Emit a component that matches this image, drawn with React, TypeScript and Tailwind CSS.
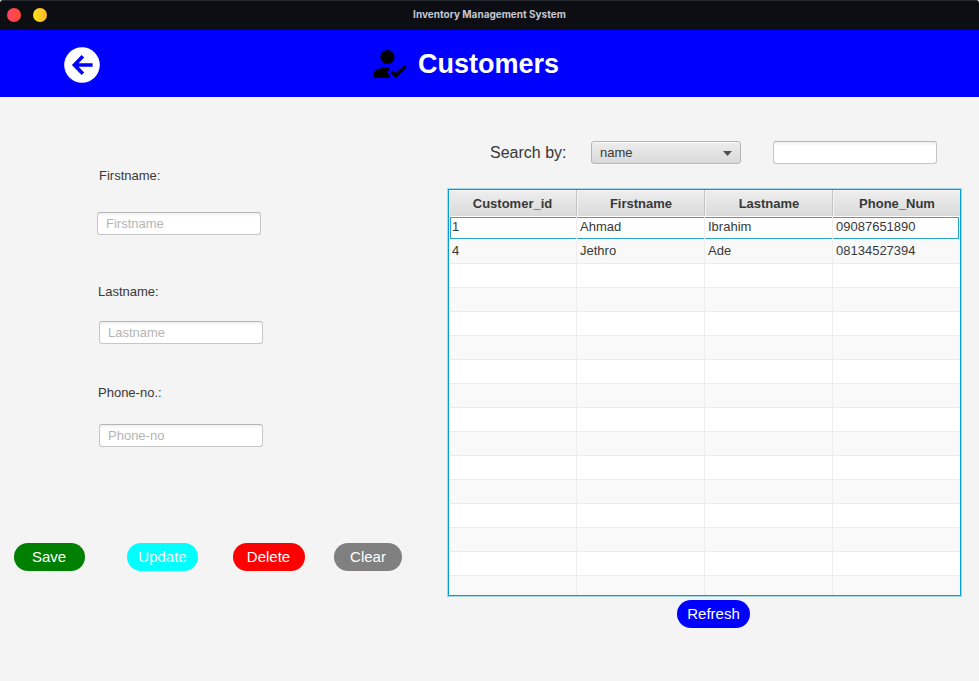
import React from "react";

const columns = ["Customer_id", "Firstname", "Lastname", "Phone_Num"];

const customers: string[][] = [
  ["1", "Ahmad", "Ibrahim", "09087651890"],
  ["4", "Jethro", "Ade", "08134527394"],
];

const rows: string[][] = Array.from({ length: 16 }, (_, i) => customers[i] ?? ["", "", "", ""]);

const grid = "grid grid-cols-[128px_128px_128px_127px]";

function TextField({ placeholder, className = "" }: { placeholder?: string; className?: string }) {
  return (
    <input
      placeholder={placeholder}
      className={`block h-[23px] w-[164px] rounded-[3px] border border-[#c6c6c6] border-t-[#b5b5b5] bg-linear-to-b from-[#f0f0f0] to-white to-[4px] px-2 text-[13px] leading-[21px] text-[#333] outline-none placeholder:text-[#b5b5b5] ${className}`}
    />
  );
}

function PillButton({ label, className }: { label: string; className: string }) {
  return (
    <button className={`h-7 shrink-0 rounded-[14px] text-center text-[15px] leading-7 text-white ${className}`}>
      {label}
    </button>
  );
}

function TitleBar() {
  return (
    <header className="relative flex h-[30px] items-start rounded-t-[3px] border-t border-[#25282e] bg-[#0c0e13] pt-[7px] pl-[7px]">
      <span className="size-3.5 rounded-full bg-linear-to-r from-[#ff4163] to-[#ff4d2e]" />
      <span className="ml-3 size-3.5 rounded-full bg-linear-to-r from-[#fbe60b] to-[#ffb32c]" />
      <h1 className="absolute inset-x-0 top-[6px] text-center font-['Inter',sans-serif] text-[10px] leading-[14px] font-bold text-[#c5c8d0]">
        Inventory Management System
      </h1>
    </header>
  );
}

function Banner() {
  return (
    <div className="flex h-[67px] bg-[#0000ff] pl-16">
      <button aria-label="Back" className="mt-[17px] size-9">
        <svg viewBox="0 0 36 36" className="size-9">
          <circle cx="18" cy="18" r="17.8" fill="#fff" />
          <path d="M28.6 18H11M18.9 9.2L10.4 18L18.9 26.8" fill="none" stroke="#0000ff" strokeWidth="3.6" />
        </svg>
      </button>
      <svg viewBox="0 0 34 30" className="mt-[19px] ml-[273px] h-[30px] w-[34px]">
        <circle cx="14.4" cy="8" r="7.1" fill="#000" />
        <path d="M0.3 28.8V25.2C0.3 21.2 6.3 18.6 14.4 18.6L17.3 18.8L14.6 23.2L17.4 28.8Z" fill="#000" />
        <path d="M18.8 22.6L22.7 26.6L32.6 17.2" fill="none" stroke="#000" strokeWidth="3.5" />
      </svg>
      <h2 className="mt-[18px] ml-[11px] text-[27px] leading-8 font-bold text-white">Customers</h2>
    </div>
  );
}

function CustomerForm() {
  return (
    <section className="flex w-[447px] shrink-0 flex-col text-[13px] leading-4">
      <label className="mt-[71px] ml-[99px]">Firstname:</label>
      <TextField placeholder="Firstname" className="mt-[28px] ml-[97px]" />
      <label className="mt-[49px] ml-[98px]">Lastname:</label>
      <TextField placeholder="Lastname" className="mt-[21px] ml-[99px]" />
      <label className="mt-[41px] ml-[98px]">Phone-no.:</label>
      <TextField placeholder="Phone-no" className="mt-[23px] ml-[99px]" />
      <div className="mt-24 flex pl-3.5">
        <PillButton label="Save" className="w-[71px] bg-[#008000] pr-px" />
        <PillButton label="Update" className="ml-[42px] w-[71px] bg-[#00ffff]" />
        <PillButton label="Delete" className="ml-[35px] w-[72px] bg-[#ff0000] pr-px" />
        <PillButton label="Clear" className="ml-[29px] w-[68px] bg-[#808080]" />
      </div>
    </section>
  );
}

function CustomerTable() {
  return (
    <div className="mt-[25px] ml-px flex h-[407px] w-[513px] flex-col overflow-hidden border border-[#039ed3] bg-white text-[13px] shadow-[0_0_0_1px_#a5d8e8]">
      <div className={`${grid} h-[26px] shrink-0`}>
        {columns.map((name, i) => (
          <div
            key={name}
            className={`border-b border-b-[#c4c4c4] bg-linear-to-b from-[#efefef] to-[#d9d9d9] text-center leading-[27px] font-bold shadow-[inset_1px_1px_0_#f5f5f5] ${i > 0 ? "pl-px" : ""} ${i < 3 ? "border-r border-r-[#c4c4c4]" : ""}`}
          >
            {name}
          </div>
        ))}
      </div>
      {rows.map((row, r) => (
        <div key={r} className={`${grid} h-6 shrink-0 ${r % 2 ? "bg-[#f9f9f9]" : "bg-white"}`}>
          {row.map((value, c) => (
            <div
              key={c}
              className={`flex ${c < 3 ? "border-r border-r-[#ededed]" : ""} ${r > 0 ? "border-b border-b-[#ededed]" : ""}`}
            >
              <span
                className={
                  r === 0
                    ? `mt-px h-[22px] flex-1 border-y border-[#25a8d6] leading-[18px] ${c === 0 ? "ml-px border-l pl-px" : "pl-[3px]"} ${c === 3 ? "mr-px border-r" : ""}`
                    : "pl-[3px] leading-[22px]"
                }
              >
                {value}
              </span>
            </div>
          ))}
        </div>
      ))}
    </div>
  );
}

export default function App() {
  return (
    <div className="flex h-[681px] w-[979px] flex-col overflow-hidden bg-[#f4f4f4] font-['Liberation_Sans',Arial,sans-serif] text-[#383838]">
      <TitleBar />
      <Banner />
      <main className="flex flex-1">
        <CustomerForm />
        <section className="flex flex-col">
          <div className="mt-11 flex h-[23px] pl-[43px]">
            <label className="w-[101px] text-[16px] leading-6">Search by:</label>
            <button className="flex h-[23px] w-[150px] items-center justify-between rounded-[3px] border border-[#b4b4b4] bg-linear-to-b from-[#ededed] to-[#dadada] pr-2 pl-2 text-[13px] shadow-[inset_0_1px_0_#f8f8f8,0_1px_0_#fafafa]">
              <span className="leading-[22px]">name</span>
              <svg viewBox="0 0 9 5" className="mt-[2px] h-[5px] w-[9px]">
                <path d="M0 0H9L4.5 5Z" fill="#505050" />
              </svg>
            </button>
            <TextField className="ml-8" />
          </div>
          <CustomerTable />
          <PillButton label="Refresh" className="mt-1 ml-[230px] w-[73px] bg-[#0000ff]" />
        </section>
      </main>
    </div>
  );
}
